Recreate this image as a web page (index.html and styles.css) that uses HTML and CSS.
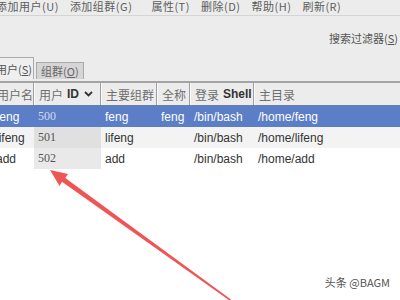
FILE: index.html
```html
<!DOCTYPE html>
<html lang="zh-CN">
<head>
  <meta charset="UTF-8" />
  <title>用户管理者</title>
  <link rel="stylesheet" href="styles.css">
</head>
<body>
  <div class="window">
    <div class="menubar">
      <span class="menu-item">添加用户(U)</span>
      <span class="menu-item wide">添加组群(G)</span>
      <span class="menu-item">属性(T)</span>
      <span class="menu-item">删除(D)</span>
      <span class="menu-item">帮助(H)</span>
      <span class="menu-item">刷新(R)</span>
    </div>

    <div class="filter-row">
      <span class="filter-label">搜索过滤器(<u>S</u>)</span>
    </div>

    <div class="tabs">
      <div class="tab active">用户(<u>S</u>)</div>
      <div class="tab">组群(<u>O</u>)</div>
    </div>

    <div class="table">
      <div class="thead">
        <div class="th">用户名</div>
        <div class="th">用户 <b>ID</b>
          <svg class="sort-icon" width="9" height="6" viewBox="0 0 9 6"><path d="M1 1 L4.5 4.5 L8 1" fill="none" stroke="#333" stroke-width="1.8"/></svg>
        </div>
        <div class="th">主要组群</div>
        <div class="th">全称</div>
        <div class="th">登录 <b>Shell</b></div>
        <div class="th last">主目录</div>
      </div>

      <div class="tbody">
        <div class="row selected">
          <div class="td">feng</div>
          <div class="td num">500</div>
          <div class="td">feng</div>
          <div class="td">feng</div>
          <div class="td">/bin/bash</div>
          <div class="td">/home/feng</div>
        </div>
        <div class="row odd">
          <div class="td">lifeng</div>
          <div class="td num">501</div>
          <div class="td">lifeng</div>
          <div class="td"></div>
          <div class="td">/bin/bash</div>
          <div class="td">/home/lifeng</div>
        </div>
        <div class="row">
          <div class="td">add</div>
          <div class="td num">502</div>
          <div class="td">add</div>
          <div class="td"></div>
          <div class="td">/bin/bash</div>
          <div class="td">/home/add</div>
        </div>
      </div>
    </div>
  </div>

  <svg class="arrow" width="400" height="300" viewBox="0 0 400 300">
    <polygon points="50,170 68,174 65.3,178 231,299.5 229.5,300.5 62,181.8 59.5,186" fill="#f05555"/>
  </svg>

  <div class="watermark">头条 @BAGM</div>
</body>
</html>
```

FILE: styles.css
```css
body {
  margin: 0;
  width: 400px;
  height: 300px;
  overflow: hidden;
  position: relative;
  background: #ececec;
  font-family: "Noto Sans CJK SC", "Liberation Sans", sans-serif;
  color: #555;
}

.window {
  display: flex;
  flex-direction: column;
  height: 300px;
}

/* menu bar */
.menubar {
  display: flex;
  align-items: flex-start;
  gap: 11px;
  height: 15px;
  margin-left: -4px;
  border-bottom: 1px solid #d4d4d4;
  font-size: 11px;
  line-height: 12px;
  color: #5c5c5c;
}

.menu-item {
  letter-spacing: 0.5px;
}

.menu-item.wide {
  margin-right: 8px;
}

/* filter */
.filter-row {
  display: flex;
  justify-content: flex-end;
  align-items: center;
  height: 41px;
  padding-top: 2px;
  padding-right: 2px;
  box-sizing: border-box;
}

.filter-label {
  font-size: 11px;
  color: #555;
}

/* tabs */
.tabs {
  display: flex;
  align-items: flex-end;
  gap: 2px;
  height: 22px;
  margin-left: -6px;
}

.tab {
  display: flex;
  align-items: center;
  height: 16px;
  padding: 0 4px;
  background: #d5d5d5;
  border: 1px solid #aaa;
  border-bottom: none;
  font-size: 11px;
  color: #666;
}

.tab.active {
  height: 21px;
  padding: 0 1px;
  background: #efefef;
  color: #555;
}

/* table */
.table {
  flex: 1;
  display: flex;
  flex-direction: column;
  margin-left: -8px;
  margin-top: 2px;
}

.thead,
.row {
  display: grid;
  grid-template-columns: 42px 67px 56px 33px 64px 1fr;
}

.thead {
  height: 22px;
  border-top: 2px solid #a4a4a4;
  background: #ececec;
}

.th {
  display: flex;
  align-items: center;
  gap: 4px;
  padding-left: 4px;
  border-right: 1px solid #a0a0a0;
  border-left: 1px solid #fafafa;
  font-size: 12px;
  color: #6e6e6e;
  white-space: nowrap;
}

.th.last {
  border-right: none;
}

.th b {
  font-family: "Liberation Sans", sans-serif;
  font-weight: 600;
  color: #333;
}

.sort-icon {
  margin-left: 1px;
}

.tbody {
  flex: 1;
  background: #fff;
}

.row {
  height: 21px;
  font-family: "Liberation Sans", sans-serif;
  font-size: 12px;
  color: #333;
}

.row.odd {
  background: #f3f3f3;
}

.row.selected {
  background: #5b7ec6;
  border-top: 1px solid #6d7ea4;
  height: 21px;
  color: #fff;
}

.td {
  display: flex;
  align-items: center;
  padding-left: 4px;
  white-space: nowrap;
}

.td.num {
  font-family: "Liberation Serif", serif;
  color: #555;
  background: #e9e9e9;
}

.row.odd .td.num {
  background: #e0e0e0;
}

.row.selected .td.num {
  background: transparent;
  color: #d2dbf1;
}

/* annotation overlay */
.arrow {
  position: absolute;
  left: 0;
  top: 0;
  pointer-events: none;
}

.watermark {
  position: absolute;
  right: 10px;
  bottom: 10px;
  font-size: 11px;
  color: #555;
  text-shadow: 0 0 2px #fff;
}
```
